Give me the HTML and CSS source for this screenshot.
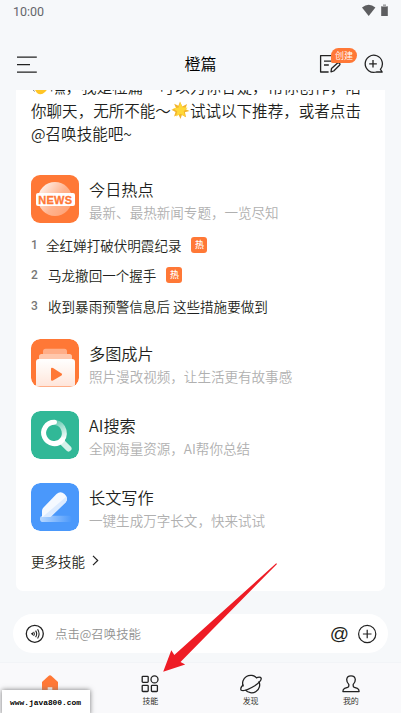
FILE: index.html
```html
<!DOCTYPE html>
<html lang="zh-CN">
<head>
<meta charset="utf-8">
<title>橙篇</title>
<link rel="stylesheet" href="styles.css">
</head>
<body>
<div class="screen">
  <div class="status">
    <span>10:00</span>
    <svg width="27" height="14" viewBox="0 0 27 14" fill="#5d5e60"><path d="M0 3.5Q6.7-1.9 13.4 3.5L6.7 12Z"/><path d="M19.2 2H21V.7h3V2h1.8v10h-6.6Z"/><path d="M19.2 2H21V.7h3V2h1.8v1h-6.6Z" fill="#a5a6a8"/></svg>
  </div>
  <header class="header">
    <svg class="menu" width="20" height="18" viewBox="0 0 20 18" fill="none" stroke="#222" stroke-width="1.3"><path d="M0 1.2h19.8M0 8.7h13M0 16.2h19.8"/></svg>
    <h1>橙篇</h1>
    <div class="header-actions">
      <div class="create">
        <svg width="24" height="20" viewBox="0 0 24 20" fill="none" stroke="#222" stroke-width="1.3" stroke-linejoin="round"><path d="M13 1.6H1.6V18h8M5 7.2h8M5 11h4.8"/><path d="m12 17.8.5-3.2 6.1-5.5q1.2-.8 2 .2.9 1-.1 2l-5.8 5.7Z"/></svg>
        <span class="badge">创建</span>
      </div>
      <svg width="21" height="20" viewBox="0 0 21 20" fill="none" stroke="#222" stroke-width="1.3" stroke-linejoin="round"><path d="M17.4 15.3A8.6 8.6 0 1 0 13.4 18h5.8Z"/><path d="M10 6v7.6M6.2 9.8h7.6"/></svg>
    </div>
  </header>
  <main class="card">
    <p class="intro"><span class="line"><svg width="19" height="18" viewBox="0 0 19 18"><path d="M2 9 5 4l10 1q3 6-1 9-4 4-8 1Z" fill="#ffc526"/><path d="m1.5 11 2 2.5" stroke="#777" fill="none"/></svg>嘿，我是橙篇～可以为你答疑，帮你创作，陪</span><span class="line">你聊天，无所不能～<svg width="19" height="18" viewBox="0 0 19 18"><path d="m9 .5 2.3 5 4.8-2.5-1.8 4.9 4.2 2-4.6 1.4 1.2 5-4.2-2.4-1.4 4-2-4.3-4.4 2 1.4-4.5L.4 8.8 5 7.2 3.2 2.7l4.2 2Z" fill="#f3b52d"/><path d="m9.3 1.3 2 4.9 5.4.6-4 3.5 1.4 5.5-4.5-3-4.6 2.7 1.3-5L2 7.3l5.5-.6Z" fill="#ffd838"/></svg>试试以下推荐，或者点击</span><span class="line">@召唤技能吧~</span></p>
    <section class="skill">
      <div class="tile news"><i></i><b>NEWS</b></div>
      <div class="copy"><h2>今日热点</h2><p>最新、最热新闻专题，一览尽知</p></div>
    </section>
    <ol class="hot">
      <li><em>1</em><span class="first">全红婵打破伏明霞纪录</span><b>热</b></li>
      <li><em>2</em><span>马龙撤回一个握手</span><b>热</b></li>
      <li><em>3</em><span>收到暴雨预警信息后 这些措施要做到</span></li>
    </ol>
    <section class="skill">
      <svg class="tile" viewBox="0 0 48 48">
        <defs><linearGradient id="film" x2="0" y2="1"><stop stop-color="#fff"/><stop offset=".5" stop-color="#fff3ed"/><stop offset="1" stop-color="#ffe5da"/></linearGradient></defs>
        <rect width="48" height="48" rx="9" fill="#ff7836"/><rect x="12" y="9.7" width="24" height="12" rx="2.5" fill="#ffae88"/><rect x="8" y="15" width="33" height="12" rx="2.5" fill="#ffc7ac"/><path d="M5 23q0-3 3-3h33q3 0 3 3v24.5H5Z" fill="url(#film)"/><path d="M20 30v10.4q0 2 2 1l8.5-5q1.3-1 0-1.9l-8.5-5.4q-2-1-2 .9Z" fill="#ff7836"/>
      </svg>
      <div class="copy"><h2>多图成片</h2><p>照片漫改视频，让生活更有故事感</p></div>
    </section>
    <section class="skill">
      <svg class="tile" viewBox="0 0 48 48">
        <defs><linearGradient id="arc" x1="26" y1="10" x2="34" y2="28" gradientUnits="userSpaceOnUse"><stop stop-color="#6bcdb5"/><stop offset="1" stop-color="#fff"/></linearGradient></defs>
        <rect width="48" height="48" rx="9" fill="#31b897"/><path d="m31.5 31.5 6 6" stroke="#d6f1ea" stroke-width="6" stroke-linecap="round"/><path d="M24.6 11.5A10.8 10.8 0 0 1 29 30.7" fill="none" stroke="url(#arc)" stroke-width="5"/><path d="M23.5 11.2A10.7 10.7 0 1 0 31.5 28.8" fill="none" stroke="#fff" stroke-width="5" stroke-linecap="round"/>
      </svg>
      <div class="copy"><h2>AI搜索</h2><p>全网海量资源，AI帮你总结</p></div>
    </section>
    <section class="skill">
      <svg class="tile" viewBox="0 0 48 48">
        <defs><linearGradient id="trail"><stop stop-color="#b8d8ff"/><stop offset="1" stop-color="#4a98fb"/></linearGradient></defs>
        <rect width="48" height="48" rx="9" fill="#4a98fb"/><rect x="9" y="32.7" width="32" height="6.3" rx="3.1" fill="url(#trail)"/><path d="M11 34V28q0-2 1.5-3.5L25.5 11q4-3.7 8 0 4.5 4 1 8.5L20.5 33q-1.2 1-3 1Z" fill="#f5f9ff"/><path d="M11.5 34 35.5 13.5q1.3 3-1 6L20.5 33q-1.2 1-3 1Z" fill="#dcebff"/>
      </svg>
      <div class="copy"><h2>长文写作</h2><p>一键生成万字长文，快来试试</p></div>
    </section>
    <div class="more">更多技能<svg width="7" height="11" viewBox="0 0 7 11" fill="none" stroke="#222" stroke-width="1.2"><path d="m1 .8 4.7 4.7L1 10.2"/></svg></div>
  </main>
  <div class="composer">
    <svg width="20" height="20" viewBox="0 0 20 20" fill="none" stroke="#222" stroke-width="1.3"><circle cx="9.8" cy="9.8" r="8.5"/><g stroke-width="1.1"><path d="M8.6 7.8q1.5 2 0 4M10.6 6.6q2.2 3.2 0 6.5M12.6 5.2q3 4.7 0 9.3"/></g><path d="M5.8 9.8 8 8.2v3.2Z" fill="#222" stroke="none"/></svg>
    <span class="hint">点击@召唤技能</span>
    <span class="at">@</span>
    <svg width="20" height="20" viewBox="0 0 20 20" fill="none" stroke="#222" stroke-width="1.2"><circle cx="10.2" cy="10" r="8.6"/><path d="M10.2 5.7v8.6M5.9 10h8.6"/></svg>
  </div>
  <nav class="tabs">
    <a><svg width="18" height="20" viewBox="0 0 18 20"><path d="M1 8 7.5 2q1.5-1.3 3 0L17 8v10H1Z" fill="#ff7836"/><path d="M6.7 13.3h4.6V19H6.7Z" fill="#fff"/></svg></a>
    <a><svg width="18" height="20" viewBox="0 0 18 20" fill="none" stroke="#222" stroke-width="1.3"><rect x="1.2" y="2.3" width="6" height="6" rx=".8"/><circle cx="13.5" cy="5.4" r="3.5"/><rect x="1.2" y="11.3" width="6" height="6.2" rx=".8"/><rect x="10.4" y="11.3" width="6" height="6.2" rx=".8"/></svg><span>技能</span></a>
    <a><svg width="22" height="20" viewBox="0 0 22 20" fill="none" stroke="#222" stroke-width="1.3"><path d="M3.3 12.5A8 8 0 0 1 16.8 4.2M18.8 7.2A8 8 0 0 1 5.4 15.8"/><path d="M16.1 3.8q4.2-1.4 5 .3 1 2.5-6.3 7.7Q4.5 18 1.3 16.2-.4 14.5 3.3 10.5"/></svg><span>发现</span></a>
    <a><svg width="18" height="20" viewBox="0 0 18 20" fill="none" stroke="#222" stroke-width="1.3" stroke-linejoin="round"><path d="M6.8 10.4Q4.6 8.2 4.7 5.5 5 1.8 9 1.8t4.3 3.7q.1 2.7-2.1 4.9v1.5q0 1 1.2 1.4l3 1.1q1.7.7 1.7 3.2H.9q0-2.5 1.7-3.2l3-1.1q1.2-.4 1.2-1.4Z"/></svg><span>我的</span></a>
  </nav>
  <svg class="arrow" width="116" height="112" viewBox="0 0 116 112"><path d="M113.2.2 11.3 92 8.3 87.3.2 108.8 22.2 101.4 17.5 98.9 114 1Z" fill="#ee1c25"/></svg>
  <div class="watermark">www.java800.com</div>
</div>
</body>
</html>
```

FILE: styles.css
```css
* { box-sizing: border-box; }
body, h1, h2, p, ol { margin: 0; padding: 0; }
body { background: #f7f8fa; font-family: "Noto Sans CJK SC", sans-serif; font-weight: 350; color: #1e1f20; }
svg { display: block; flex: none; }
.screen { position: relative; width: 401px; height: 713px; overflow: hidden; display: flex; flex-direction: column; background: #f6f8fa; }
.status { height: 45px; flex: none; padding: 4px 12px 0 13px; display: flex; justify-content: space-between; font: 12.5px/15px Roboto, sans-serif; color: #65666a; }
.header { height: 45px; flex: none; padding: 0 17px; display: grid; grid-template-columns: 1fr auto 1fr; align-items: start; }
.menu { margin-top: 11px; }
h1 { font-size: 16px; line-height: 24px; font-weight: 350; color: #000; margin-top: 6px; }
.header-actions { display: flex; justify-content: flex-end; gap: 20px; padding-top: 9px; }
.create { position: relative; }
.badge { position: absolute; left: 12px; top: -6px; width: 26px; height: 15px; border-radius: 8px 8px 8px 2px; background: #ff7836; color: #fff; font-size: 9px; line-height: 15px; text-align: center; }
.card { height: 501px; flex: none; width: 369px; margin-left: 16px; padding: 0 15px; background: #fff; border-radius: 0 0 7px 7px; overflow: hidden; display: flex; flex-direction: column; }
.intro { font-size: 15.55px; line-height: 23.5px; height: 85px; margin-top: -15px; margin-bottom: 15px; flex: none; }
.line { display: flex; white-space: nowrap; align-items: center; height: 23.5px; }
.skill { display: flex; gap: 10px; height: 48px; margin-bottom: 23.8px; flex: none; }
.tile { width: 48px; height: 48px; border-radius: 9px; flex: none; }
.news { background: #ff7836; position: relative; }
.news i { position: absolute; left: 7px; top: 7px; width: 34px; height: 34px; border-radius: 50%; background: linear-gradient(125deg, #fff, #ffb38e 55%, #ff9d6d); }
.news b { position: absolute; left: 4.5px; top: 17.5px; width: 39.5px; height: 13.5px; background: #fff; border-radius: 2px; color: #ff7836; font: 700 11px/14px "Liberation Sans", sans-serif; letter-spacing: .3px; text-align: center; -webkit-text-stroke: .3px #ff7836; }
.copy { white-space: nowrap; }
h2 { font-size: 16.2px; line-height: 24px; font-weight: 350; margin-top: 2px; }
.copy p { font-size: 13.56px; line-height: 20px; color: #b0b0b0; margin-top: 1px; }
.hot { list-style: none; height: 92.4px; margin-top: -23.8px; margin-bottom: 23.8px; padding-top: 6.5px; flex: none; }
.hot li { display: flex; align-items: center; height: 30px; font-size: 13.56px; white-space: nowrap; }
.hot li:last-child { height: 33px; }
.hot em { font: 500 12px/20px Roboto, sans-serif; color: #777; width: 17px; }
.hot .first { margin-left: -2px; }
.hot b { width: 16px; height: 16px; margin-left: 10px; border-radius: 3px; background: #ff7836; color: #fff; font-size: 9px; line-height: 15.5px; font-weight: 500; text-align: center; }
.more { display: flex; align-items: center; gap: 7px; font-size: 13.5px; line-height: 20px; margin-top: -4px; }
.composer { width: 375px; height: 39px; flex: none; margin: 23.4px 0 0 13px; padding: 0 11px 0 12px; border-radius: 20px; background: #fff; display: flex; align-items: center; }
.hint { margin-left: 10px; flex: 1; font-size: 12.4px; color: #929292; }
.at { font: 19px/20px "Liberation Sans", sans-serif; margin-right: 8px; }
.tabs { height: 51px; flex: none; margin-top: 8.6px; background: #f9f9fb; border-top: 1px solid #f2f4f7; display: grid; grid-template-columns: repeat(4, 1fr); padding-top: 11px; }
.tabs a { display: flex; flex-direction: column; align-items: center; font-size: 8px; line-height: 12px; gap: 1px; }
.arrow { position: absolute; left: 163px; top: 563px; }
.watermark { position: absolute; left: 2px; top: 690px; width: 88px; height: 25px; background: #fff; box-shadow: 0 0 5px #777; font: 700 7.9px/26px "Liberation Mono", monospace; color: #000; padding-left: 8px; }
```
